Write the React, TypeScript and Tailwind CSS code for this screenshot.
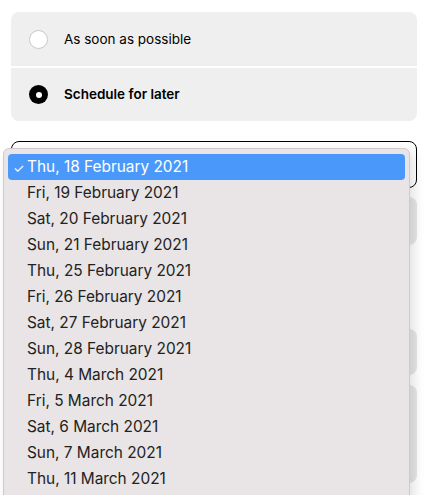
import React from "react";

const dates = [
  "Thu, 18 February 2021",
  "Fri, 19 February 2021",
  "Sat, 20 February 2021",
  "Sun, 21 February 2021",
  "Thu, 25 February 2021",
  "Fri, 26 February 2021",
  "Sat, 27 February 2021",
  "Sun, 28 February 2021",
  "Thu, 4 March 2021",
  "Fri, 5 March 2021",
  "Sat, 6 March 2021",
  "Sun, 7 March 2021",
  "Thu, 11 March 2021",
];

export default function App() {
  return (
    <div
      className="relative h-[495px] w-[429px] overflow-hidden bg-white"
      style={{ fontFamily: "Inter, 'Liberation Sans', sans-serif" }}
    >
      <div className="flex flex-col pl-[11px] pr-[12px] pt-[12px]">
        {/* Delivery time options */}
        <div className="flex flex-col gap-[2px] overflow-hidden rounded-lg bg-white">
          <div className="flex h-[54px] items-center gap-4 bg-[#efefef] pl-[18px]">
            <span className="h-[19px] w-[19px] rounded-full border border-[#c8c8c8] bg-white" />
            <span className="text-[13.5px] text-black">As soon as possible</span>
          </div>
          <div className="flex h-[53px] items-center gap-4 bg-[#efefef] pl-[18px]">
            <span className="flex h-[19px] w-[19px] items-center justify-center rounded-full bg-black">
              <span className="h-[6px] w-[6px] rounded-full bg-white" />
            </span>
            <span className="text-[13.5px] font-semibold text-black">Schedule for later</span>
          </div>
        </div>

        {/* Date select */}
        <div className="mt-[20px] h-[47px] rounded-lg border border-black bg-white" />

        {/* Time select + other fields behind dropdown */}
        <div className="mt-[9px] h-[48px] rounded-lg bg-[#e6e6e6]" />
        <div className="mt-[84px] h-[46px] rounded-lg bg-[#e6e6e6]" />
        <div className="mt-[10px] h-[98px] rounded-lg bg-[#e6e6e6]" />
      </div>

      {/* Native date dropdown */}
      <div className="absolute left-[3px] top-[148px] h-[400px] w-[407px] rounded-t-[6px] border border-[#cfcacb] bg-[#e9e4e5] px-[4px] pt-[5px] shadow-[4px_4px_12px_rgba(0,0,0,0.12)]">
        {dates.map((d, i) => (
          <div
            key={d}
            className={`relative flex h-[26px] items-center rounded-[4px] pl-[19px] text-[15.4px] ${
              i === 0 ? "bg-[#4a99fa] text-white" : "text-[#222]"
            }`}
          >
            {i === 0 && (
              <span className="absolute left-[5px] top-[5px] text-[13px]">✓</span>
            )}
            {d}
          </div>
        ))}
      </div>
    </div>
  );
}
